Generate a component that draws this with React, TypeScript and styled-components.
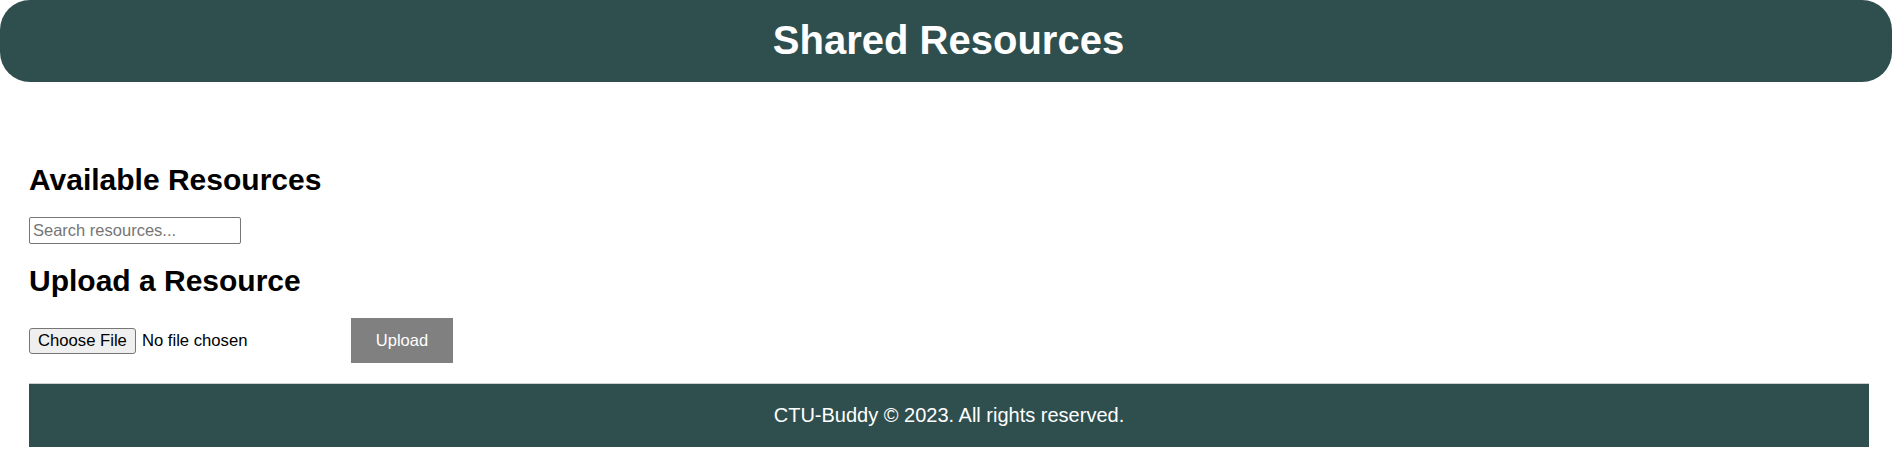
import React from "react";
import styled, { createGlobalStyle } from "styled-components";

const GlobalStyle = createGlobalStyle`
  html, body {
    margin: 0;
    padding: 0;
    background: #ffffff;
    font-family: "Liberation Sans", Arial, sans-serif;
  }
`;

const Page = styled.div`
  display: flex;
  flex-direction: column;
  width: 1892px;
`;

const Header = styled.header`
  height: 82px;
  background: #2f4f4f;
  border-radius: 30px;
  display: flex;
  align-items: center;
  justify-content: center;
  padding-left: 5px;
`;

const Title = styled.h1`
  margin: 0;
  color: #ffffff;
  font-size: 40px;
  line-height: 46px;
  font-weight: 700;
  padding-bottom: 2px;
`;

const Main = styled.main`
  display: flex;
  flex-direction: column;
  align-items: flex-start;
  padding: 81px 23px 0 29px;
`;

const SectionTitle = styled.h2<{ $gapTop: number }>`
  margin: ${(p) => p.$gapTop}px 0 0 0;
  font-size: 30px;
  line-height: 34px;
  font-weight: 700;
  color: #000000;
`;

const SearchInput = styled.input`
  margin-top: 20px;
  box-sizing: border-box;
  width: 212px;
  height: 27px;
  border: 1px solid #767676;
  border-radius: 2px;
  padding: 1px 3px;
  font-family: "Liberation Sans", Arial, sans-serif;
  font-size: 16.5px;
  color: #000;
  outline: none;
  &::placeholder {
    color: #757575;
  }
`;

const UploadRow = styled.form`
  margin-top: 20px;
  display: flex;
  align-items: center;
`;

const FileInput = styled.input`
  width: 322px;
  font-family: "Liberation Sans", Arial, sans-serif;
  font-size: 16.67px;
  color: #000;
  &::file-selector-button {
    box-sizing: border-box;
    height: 26px;
    margin: 0 6px 0 0;
    padding: 1px 8px;
    font-family: "Liberation Sans", Arial, sans-serif;
    font-size: 16.67px;
    color: #000;
    background: #efefef;
    border: 1px solid #767676;
    border-radius: 3px;
  }
`;

const UploadButton = styled.button`
  box-sizing: border-box;
  width: 102px;
  height: 45px;
  border: none;
  background: #808080;
  color: #ffffff;
  font-family: "Liberation Sans", Arial, sans-serif;
  font-size: 16.5px;
  padding: 0;
`;

const Footer = styled.footer`
  margin: 20px 23px 0 29px;
  box-sizing: border-box;
  height: 64px;
  border-top: 1px solid #cfcfcf;
  background: #2f4f4f;
  color: #ffffff;
  display: flex;
  align-items: center;
  justify-content: center;
  font-size: 20px;
`;

export default function App() {
  return (
    <Page>
      <GlobalStyle />
      <Header>
        <Title>Shared Resources</Title>
      </Header>
      <Main>
        <SectionTitle $gapTop={0}>Available Resources</SectionTitle>
        <SearchInput type="text" placeholder="Search resources..." />
        <SectionTitle $gapTop={20}>Upload a Resource</SectionTitle>
        <UploadRow onSubmit={(e) => e.preventDefault()}>
          <FileInput type="file" />
          <UploadButton type="submit">Upload</UploadButton>
        </UploadRow>
      </Main>
      <Footer>CTU-Buddy © 2023. All rights reserved.</Footer>
    </Page>
  );
}
